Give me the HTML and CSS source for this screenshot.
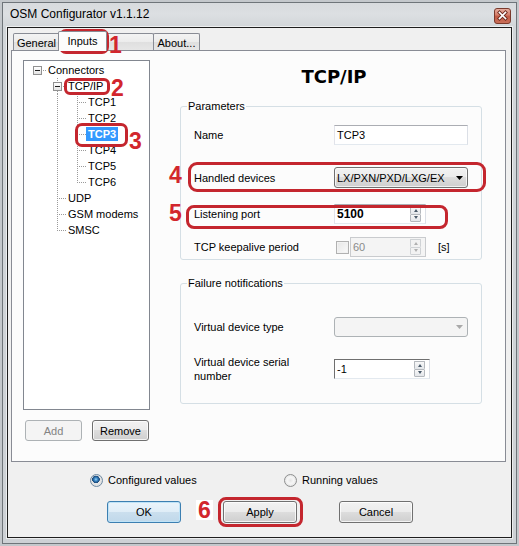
FILE: index.html
```html
<!DOCTYPE html>
<html>
<head>
<meta charset="utf-8">
<title>OSM Configurator</title>
<link rel="stylesheet" href="styles.css">
</head>
<body>
<div class="window">
  <div class="titlebar">
    <span class="title">OSM Configurator v1.1.12</span>
    <span class="close">
      <svg width="17" height="16" viewBox="0 0 17 16">
        <defs>
          <linearGradient id="cg" x1="0" y1="0" x2="0" y2="1">
            <stop offset="0" stop-color="#eab2a4"/>
            <stop offset="0.45" stop-color="#d27a66"/>
            <stop offset="0.5" stop-color="#c25a44"/>
            <stop offset="1" stop-color="#c9705a"/>
          </linearGradient>
        </defs>
        <rect x="0.5" y="0.5" width="16" height="15" rx="2.5" fill="url(#cg)" stroke="#7a3a2c"/>
        <path d="M5.5 4.5 L11.5 10.5 M11.5 4.5 L5.5 10.5" stroke="#6b2a1e" stroke-width="3.4" stroke-linecap="square" fill="none"/>
        <path d="M5.5 4.5 L11.5 10.5 M11.5 4.5 L5.5 10.5" stroke="#ffffff" stroke-width="1.7" stroke-linecap="square" fill="none"/>
      </svg>
    </span>
  </div>
  <div class="client">
    <div class="tabs">
      <div class="tab t-general">General</div>
      <div class="tab t-inputs">Inputs</div>
      <div class="tab t-blank"></div>
      <div class="tab t-about">About...</div>
    </div>
    <div class="panel">
      <div class="left">
        <div class="tree">
          <div class="row"><span class="c exp stub"><span class="box"></span></span><span class="lbl">Connectors</span></div>
          <div class="row"><span class="c"></span><span class="c exp stub up down"><span class="box"></span></span><span class="lbl">TCP/IP</span></div>
          <div class="row"><span class="c"></span><span class="c vl"></span><span class="c tee"></span><span class="lbl">TCP1</span></div>
          <div class="row"><span class="c"></span><span class="c vl"></span><span class="c tee"></span><span class="lbl">TCP2</span></div>
          <div class="row"><span class="c"></span><span class="c vl"></span><span class="c tee"></span><span class="lbl sel">TCP3</span></div>
          <div class="row"><span class="c"></span><span class="c vl"></span><span class="c tee"></span><span class="lbl">TCP4</span></div>
          <div class="row"><span class="c"></span><span class="c vl"></span><span class="c tee"></span><span class="lbl">TCP5</span></div>
          <div class="row"><span class="c"></span><span class="c vl"></span><span class="c ell"></span><span class="lbl">TCP6</span></div>
          <div class="row"><span class="c"></span><span class="c tee"></span><span class="lbl">UDP</span></div>
          <div class="row"><span class="c"></span><span class="c tee"></span><span class="lbl">GSM modems</span></div>
          <div class="row"><span class="c"></span><span class="c ell"></span><span class="lbl">SMSC</span></div>
        </div>
        <div class="tree-buttons">
          <button class="btn small disabled">Add</button>
          <button class="btn small">Remove</button>
        </div>
      </div>
      <div class="right">
        <h1 class="heading">TCP/IP</h1>
        <fieldset class="group params">
          <legend>Parameters</legend>
          <div class="frow r-name">
            <span class="label">Name</span>
            <span class="textbox">TCP3</span>
          </div>
          <div class="frow r-dev">
            <span class="label">Handled devices</span>
            <span class="combo"><span class="combo-text">LX/PXN/PXD/LXG/EX</span><svg class="arrow" width="7" height="4" viewBox="0 0 7 4"><path d="M0 0H7L3.5 4Z" fill="#000"/></svg></span>
          </div>
          <div class="frow r-port">
            <span class="label">Listening port</span>
            <span class="spinbox w-port"><span class="spin-text bold">5100</span><span class="spin"><span class="sb up"></span><span class="sb dn"></span></span></span>
          </div>
          <div class="frow r-keep">
            <span class="label">TCP keepalive period</span>
            <span class="check"></span>
            <span class="spinbox w-keep off"><span class="spin-text">60</span><span class="spin"><span class="sb up"></span><span class="sb dn"></span></span></span>
            <span class="unit">[s]</span>
          </div>
        </fieldset>
        <fieldset class="group failure">
          <legend>Failure notifications</legend>
          <div class="frow r-vtype">
            <span class="label">Virtual device type</span>
            <span class="combo off"><span class="combo-text"></span><svg class="arrow" width="7" height="4" viewBox="0 0 7 4"><path d="M0 0H7L3.5 4Z" fill="#a9a9a9"/></svg></span>
          </div>
          <div class="frow r-serial">
            <span class="label two">Virtual device serial<br>number</span>
            <span class="spinbox w-serial"><span class="spin-text">-1</span><span class="spin"><span class="sb up"></span><span class="sb dn"></span></span></span>
          </div>
        </fieldset>
      </div>
    </div>
    <div class="mode">
      <label class="radio-item first"><span class="radio on"></span>Configured values</label>
      <label class="radio-item"><span class="radio"></span>Running values</label>
    </div>
    <div class="actions">
      <button class="btn wide default">OK</button>
      <button class="btn wide">Apply</button>
      <button class="btn wide">Cancel</button>
    </div>
  </div>

  <div class="mark m1"></div><div class="num n1">1</div>
  <div class="mark m2"></div><div class="num n2">2</div>
  <div class="mark m3"></div><div class="num n3">3</div>
  <div class="mark m4"></div><div class="num n4">4</div>
  <div class="mark m5"></div><div class="num n5">5</div>
  <div class="mark m6"></div><div class="num n6">6</div>
</div>
</body>
</html>
```
FILE: styles.css
```css
* { box-sizing: border-box; }
html, body { margin: 0; padding: 0; }
body {
  width: 519px; height: 546px; overflow: hidden;
  background: #c9cdd1;
  font-family: "Liberation Sans", Arial, sans-serif;
  font-size: 11px; color: #000;
}
.window {
  position: relative;
  width: 519px; height: 546px;
  display: flex; flex-direction: column;
  padding: 0 7px 8px 7px;
  background: linear-gradient(to bottom, #a9aeb3 0, #d8dbde 3px, #dcdfe2 14px, #d2d6d9 27px, #cdd1d5 100%);
  box-shadow: inset 0 0 0 2px #c4c8cc, inset 0 0 0 3px #6f757a;
}
.titlebar { height: 27px; flex: none; display: flex; align-items: flex-start; padding-left: 3px; }
.title { font-size: 12px; line-height: 15px; margin-top: 7px; color: #000; }
.close { margin-left: auto; margin-top: 8px; margin-right: 1px; width: 17px; height: 16px; display: block; }
.close svg { display: block; }

.client {
  flex: 1; display: flex; flex-direction: column;
  border: 1px solid #1e1e1e; background: #f0f0f0;
  box-shadow: 0 0 0 1px rgba(255,255,255,0.6);
}

/* tabs */
.tabs { height: 22px; flex: none; display: flex; align-items: flex-end; margin-left: 5px; }
.tab {
  height: 17px; border: 1px solid #898c95; border-bottom: 0; border-radius: 2px 2px 0 0;
  background: linear-gradient(#f3f3f3, #ececec 50%, #dfdfdf 50%, #e6e6e6);
  text-align: center; padding-top: 2px; line-height: 14px; white-space: nowrap;
}
.t-general { width: 47px; }
.t-inputs { width: 49px; height: 20px; margin: 0 -2px -1px -2px; background: #fcfcfc; position: relative; z-index: 1; }
.t-blank { width: 49px; }
.t-about { width: 47px; margin-left: -1px; }

.panel {
  width: 495px; height: 412px; margin-left: 3px; flex: none;
  border: 1px solid #898c95; background: #fcfcfc;
  display: flex; padding: 9px 0 0 11px;
}

/* left side: tree */
.left { width: 127px; flex: none; display: flex; flex-direction: column; }
.tree { height: 350px; border: 1px solid #828790; background: #fff; padding: 1px 0 0 3px; }
.row { display: flex; height: 16px; align-items: center; }
.c {
  --dv: repeating-linear-gradient(to bottom, #9a9a9a 0 1px, transparent 1px 2px);
  --dh: repeating-linear-gradient(to right, #9a9a9a 0 1px, transparent 1px 2px);
  width: 20px; height: 16px; flex: none;
}
.c.vl { background: var(--dv) 10px 0 / 1px 16px no-repeat; }
.c.tee { background: var(--dv) 10px 0 / 1px 16px no-repeat, var(--dh) 12px 8px / 8px 1px no-repeat; }
.c.ell { background: var(--dv) 10px 0 / 1px 9px no-repeat, var(--dh) 12px 8px / 8px 1px no-repeat; }
.c.exp { display: flex; align-items: flex-start; }
.c.exp.stub { background: var(--dh) 16px 8px / 4px 1px no-repeat; }
.c.exp.stub.up.down {
  background: var(--dh) 16px 8px / 4px 1px no-repeat,
              var(--dv) 10px 0 / 1px 4px no-repeat,
              var(--dv) 10px 13px / 1px 3px no-repeat;
}
.box {
  width: 9px; height: 9px; margin: 4px 0 0 6px;
  border: 1px solid #919191;
  background: linear-gradient(#1e1e1e, #1e1e1e) center / 5px 1px no-repeat, linear-gradient(#ffffff, #e4e4e4);
}
.lbl { margin-left: -1px; padding: 0 2px; line-height: 14px; white-space: nowrap; }
.lbl.sel { background: #3399ff; color: #fff; font-weight: bold; }

.tree-buttons { display: flex; gap: 10px; margin-top: 10px; padding-left: 2px; }

.btn {
  font-family: "Liberation Sans", Arial, sans-serif; font-size: 11px; color: #000;
  border: 1px solid #707070; border-radius: 3px; padding: 0;
  background: linear-gradient(#f2f2f2, #ebebeb 50%, #dddddd 50%, #cfcfcf);
  box-shadow: inset 0 0 0 1px rgba(255,255,255,0.75);
}
.btn.small { width: 57px; height: 21px; }
.btn.disabled { border-color: #adb2b5; background: #f4f4f4; color: #838383; box-shadow: none; }
.btn.wide { width: 74px; height: 22px; }
.btn.default {
  border-color: #3c7fb1;
  background: linear-gradient(#eaf4fb, #dfedf7 50%, #cbdfee 50%, #c0d8ea);
  box-shadow: inset 0 0 0 1px #bfe3f7;
}

/* right side */
.right { width: 302px; flex: none; margin-left: 30px; display: flex; flex-direction: column; }
.heading {
  margin: 6px 0 12px; padding-left: 6px; text-align: center;
  font: bold 18px/22px "DejaVu Sans", Verdana, sans-serif;
}
.group { margin: 0; padding: 0 0 2px 13px; border: 1px solid #d5dfe5; border-radius: 3px; min-width: 0; }
.group legend { margin-left: -7px; padding: 0 1px; font-size: 11px; line-height: 13px; }
.failure { margin-top: 17px; padding-bottom: 20px; }

.frow { display: flex; align-items: center; }
.label { width: 140px; flex: none; white-space: nowrap; }
.label.two { line-height: 14px; }
.r-name { margin-top: 12px; height: 20px; }
.r-dev { margin-top: 22px; height: 21px; }
.r-port { margin-top: 16px; height: 20px; }
.r-keep { margin-top: 13px; height: 20px; }
.r-vtype { margin-top: 27px; height: 20px; }
.r-serial { margin-top: 18px; height: 28px; }

.textbox {
  width: 134px; height: 20px; padding: 0 2px; line-height: 18px;
  border: 1px solid; border-color: #abadb3 #dbdfe6 #e3e9ef #e2e3ea; background: #fff;
}
.combo {
  width: 134px; height: 21px; display: flex; align-items: center; padding-left: 2px;
  border: 1px solid #707070; border-radius: 3px;
  background: linear-gradient(#f2f2f2, #ebebeb 50%, #dddddd 50%, #cfcfcf);
  box-shadow: inset 0 0 0 1px rgba(255,255,255,0.7);
}
.combo-text { width: 112px; overflow: hidden; white-space: nowrap; }
.combo .arrow { margin-left: 7px; display: block; }
.combo.off { border-color: #adb2b5; background: #f4f4f4; box-shadow: none; height: 20px; }

.spinbox {
  height: 20px; display: flex; align-items: center;
  border: 1px solid; border-color: #abadb3 #dbdfe6 #e3e9ef #e2e3ea; background: #fff;
}
.w-port { width: 92px; }
.w-keep { width: 76px; margin-left: 1px; }
.w-serial { width: 96px; border-color: #6f6f6f #dbdfe6 #e3e9ef #6f6f6f; }
.spin-text { flex: 1; padding-left: 2px; }
.bold { font-weight: bold; font-size: 12px; }
.spin { width: 11px; height: 16px; margin-right: 4px; display: flex; flex-direction: column; gap: 0; }
.sb {
  flex: 1; border: 1px solid #b4b8bd; border-radius: 1px;
  background: linear-gradient(#f8f8f8, #e3e6ea);
  display: flex; align-items: center; justify-content: center;
}
.sb.up { border-bottom-width: 0; }
.sb::after { content: ""; border-left: 2.5px solid transparent; border-right: 2.5px solid transparent; }
.sb.up::after { border-bottom: 3px solid #4a5a6a; }
.sb.dn::after { border-top: 3px solid #4a5a6a; }
.spinbox.off { border-color: #c9cbce; background: #f4f4f4; color: #8a8a8a; }
.spinbox.off .sb { border-color: #cfd2d5; background: #f2f2f2; }
.spinbox.off .sb.up::after { border-bottom-color: #b0b0b0; }
.spinbox.off .sb.dn::after { border-top-color: #b0b0b0; }
.check {
  width: 13px; height: 13px; margin-left: 2px;
  border: 1px solid #b1b1b1; background: linear-gradient(135deg, #e6e6e6, #fafafa);
  box-shadow: inset 0 0 0 1px #f2f2f2;
}
.unit { margin-left: 12px; }

/* bottom */
.mode { display: flex; align-items: center; height: 16px; margin-top: 10px; padding-left: 82px; flex: none; }
.radio-item { display: flex; align-items: center; gap: 5px; white-space: nowrap; }
.radio-item.first { width: 194px; }
.radio {
  width: 13px; height: 13px; border-radius: 50%; border: 1px solid #8e8f8f;
  background: radial-gradient(circle at 50% 50%, #e6e6e6 0, #f6f6f6 40%, #d8d8d8 100%);
}
.radio.on {
  border-color: #6e8aa3;
  background: radial-gradient(circle at 45% 40%, #9fd6f6 0, #3d8ac8 1.6px, #1d4e80 3.3px, #1d4e80 3.6px, transparent 4px),
              radial-gradient(circle, #f4f4f4, #d6d6d6);
}
.actions { display: flex; gap: 42px; padding-left: 99px; margin-top: 13px; flex: none; }

/* annotations */
.mark { position: absolute; border: 3px solid #c4262e; border-radius: 7px; }
.m1 { left: 59px; top: 29px; width: 50px; height: 25px; }
.m2 { left: 64px; top: 78px; width: 46px; height: 17px; border-radius: 6px; }
.m3 { left: 75px; top: 123px; width: 53px; height: 24px; }
.m4 { left: 188px; top: 162px; width: 298px; height: 30px; border-radius: 9px; }
.m5 { left: 186px; top: 205px; width: 262px; height: 24px; border-radius: 8px; }
.m6 { left: 218px; top: 497px; width: 85px; height: 30px; border-radius: 8px; }
.num {
  position: absolute; color: #d2262d;
  font: bold 23px/18px "Liberation Sans", Arial, sans-serif;
}
.n1 { left: 109px; top: 36px; }
.n2 { left: 111px; top: 79px; }
.n3 { left: 129px; top: 132px; }
.n4 { left: 169px; top: 166px; }
.n5 { left: 169px; top: 204px; }
.n6 { left: 196px; top: 500px; background: #fff; padding: 1px 2px; }
```
